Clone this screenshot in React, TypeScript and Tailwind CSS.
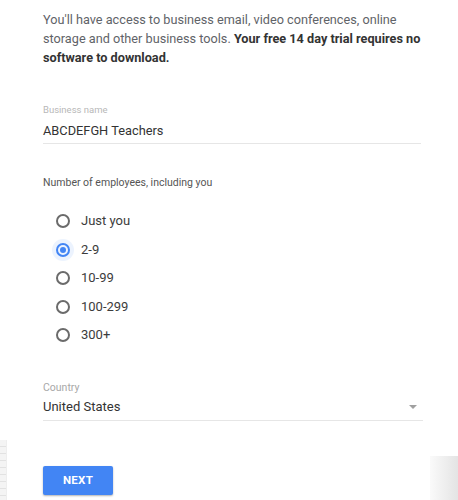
import React from "react";

const font = { fontFamily: "Roboto, 'Liberation Sans', sans-serif" };

function Radio({ label, checked }: { label: string; checked?: boolean }) {
  return (
    <label className="flex h-[28.5px] items-center">
      <span className="relative ml-[13px] flex h-[14px] w-[14px] items-center justify-center">
        {checked && <span className="absolute -inset-[4px] rounded-full bg-[#4285f4]/10" />}
        <span
          className={
            checked
              ? "relative flex h-[14px] w-[14px] items-center justify-center rounded-full border-2 border-[#4285f4]"
              : "relative h-[14px] w-[14px] rounded-full border-2 border-[#6b6b6b]"
          }
        >
          {checked && <span className="h-[6px] w-[6px] rounded-full bg-[#4285f4]" />}
        </span>
      </span>
      <span className="ml-[11px] text-[13px] leading-[18px] text-[#3c3c3c]">{label}</span>
    </label>
  );
}

export default function App() {
  return (
    <div className="relative h-[500px] w-[458px] overflow-hidden bg-white" style={font}>
      <div className="px-[43px] pt-[9.5px]">
        <p className="w-[382px] text-[12.7px] leading-[19px] text-[#5f6368]">
          You'll have access to business email, video conferences, online storage and other business tools.{" "}
          <span className="font-bold text-[#333]">Your free 14 day trial requires no software to download.</span>
        </p>

        <div className="mt-[37.5px] w-[378px] border-b border-[#e6e6e6] pb-[3px]">
          <div className="text-[9.5px] leading-[12px] text-[#b8b8b8]">Business name</div>
          <div className="mt-[6px] text-[12.8px] leading-[18px] text-[#333]">ABCDEFGH Teachers</div>
        </div>

        <div className="mt-[32px] text-[10.5px] leading-[14px] text-[#555]">Number of employees, including you</div>

        <div className="mt-[17px] flex flex-col">
          <Radio label="Just you" />
          <Radio label="2-9" checked />
          <Radio label="10-99" />
          <Radio label="100-299" />
          <Radio label="300+" />
        </div>

        <div className="mt-[32.5px] w-[380px] border-b border-[#e6e6e6] pb-[4px]">
          <div className="text-[10.5px] leading-[12px] text-[#a8a8a8]">Country</div>
          <div className="mt-[4px] flex items-center justify-between pr-[6px]">
            <span className="text-[13px] leading-[18px] text-[#333]">United States</span>
            <span className="h-0 w-0 border-x-[4px] border-t-[4px] border-x-transparent border-t-[#a0a0a0]" />
          </div>
        </div>

        <button className="mt-[45px] flex h-[29px] w-[70px] items-center justify-center rounded-[2px] bg-[#4285f4] text-[11.5px] font-bold tracking-wide text-white shadow-[0_1px_2px_rgba(0,0,0,0.3)]">
          NEXT
        </button>
      </div>

      <div className="absolute bottom-0 left-0 h-[60px] w-[7px] border-r border-[#eee] bg-[repeating-linear-gradient(to_bottom,#f4f4f4_0px,#f4f4f4_6px,#e2e2e2_6px,#e2e2e2_7px)]" />
      <div className="absolute bottom-0 right-0 h-[44px] w-[28px] bg-gradient-to-l from-[#e4e4e4] to-[#fafafa]" />
    </div>
  );
}
